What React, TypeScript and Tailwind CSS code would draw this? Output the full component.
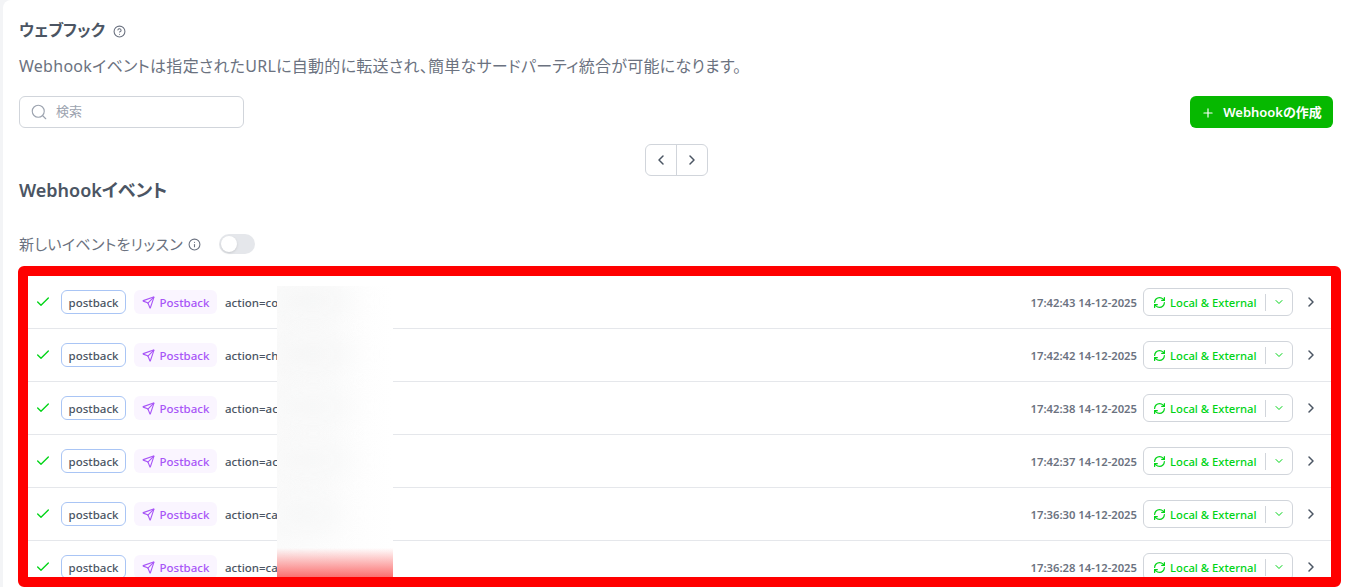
import React from "react";
import { ChevronDown, ChevronLeft, ChevronRight, Check, CircleHelp, Info, Plus, RefreshCw, Search, Send } from "lucide-react";

const rows = [
  { action: "action=co", time: "17:42:43 14-12-2025" },
  { action: "action=ch", time: "17:42:42 14-12-2025" },
  { action: "action=ac", time: "17:42:38 14-12-2025" },
  { action: "action=ac", time: "17:42:37 14-12-2025" },
  { action: "action=ca", time: "17:36:30 14-12-2025" },
  { action: "action=ca", time: "17:36:28 14-12-2025" },
];

function EventRow({ action, time }: { action: string; time: string }) {
  return (
    <div className="flex h-[53px] shrink-0 items-center border-b border-[#e5e7eb] pl-[7px] pr-3">
      <Check className="mr-[10px] shrink-0 text-[#00d416]" size={16} strokeWidth={2} />
      <span className="flex h-6 w-[65px] items-center justify-center rounded-md border border-[#a9c5f5] pt-px text-[11.5px] font-medium text-[#4b5563]">
        postback
      </span>
      <span className="ml-2 flex h-6 w-[83px] items-center justify-center gap-[5px] rounded-md bg-[#faf5ff] pt-px text-[11.5px] font-medium text-[#a855f7]">
        <Send size={13} />
        Postback
      </span>
      <span className="ml-2 pt-px text-[11.5px] font-medium text-[#4b5563]">{action}</span>
      <span className="ml-auto pt-[2px] text-[11.25px] font-semibold text-[#6b7280]">{time}</span>
      <div className="ml-[6px] flex h-7 w-[150px] items-center whitespace-nowrap rounded-md border border-[#d1d5db] pl-[9px] text-[11.25px] font-medium text-[#00d416]">
        <RefreshCw size={13} strokeWidth={2.25} />
        <span className="ml-[4px] pt-[2px]">Local &amp; External</span>
        <span className="ml-[9px] h-[17px] w-px bg-[#d1d5db]" />
        <ChevronDown className="ml-[7px]" size={12} />
      </div>
      <ChevronRight className="ml-[10px] text-[#4b5563]" size={16} strokeWidth={2.25} />
    </div>
  );
}

export default function App() {
  return (
    <div className="h-[587px] w-[1345px] overflow-hidden bg-[#f3f4f6] pl-[3px] font-['Noto_Sans','Noto_Sans_CJK_JP',sans-serif] [font-feature-settings:'palt']">
      <div className="relative h-full rounded-tl-lg bg-white pl-4 pr-3">
        <div className="flex h-[60px] items-end pb-[20px]">
          <h1 className="text-[16px] font-bold leading-5 text-[#4b5563]">ウェブフック</h1>
          <CircleHelp className="mb-[2px] ml-2 text-[#6b7280]" size={13} />
        </div>
        <p className="-mt-[6px] text-[16px] leading-6 tracking-[0.27px] text-[#6b7280]">
          Webhookイベントは指定されたURLに自動的に転送され、簡単なサードパーティ統合が可能になります。
        </p>
        <div className="mt-[18px] flex items-center justify-between">
          <div className="flex h-8 w-[225px] items-center rounded-md border border-[#d1d5db] pl-[10px] text-[13px] text-[#9ca3af]">
            <Search size={18} strokeWidth={1.5} />
            <span className="ml-2">検索</span>
          </div>
          <button className="flex h-8 w-[143px] items-center justify-center gap-2 rounded-md bg-[#06b800] pt-px text-[13px] font-semibold text-white">
            <Plus size={14} />
            Webhookの作成
          </button>
        </div>
        <div className="mt-4 flex justify-center">
          <div className="flex h-8 w-[63px] rounded-md border border-[#d1d5db] text-[#4b5563]">
            <span className="flex flex-1 items-center justify-center border-r border-[#d1d5db]">
              <ChevronLeft size={16} strokeWidth={2.25} />
            </span>
            <span className="flex flex-1 items-center justify-center">
              <ChevronRight size={16} strokeWidth={2.25} />
            </span>
          </div>
        </div>
        <h2 className="text-[18px] font-semibold leading-7 text-[#4b5563]">Webhookイベント</h2>
        <div className="mt-[30px] flex h-5 items-center text-[15px] tracking-[0.33px] text-[#6b7280]">
          新しいイベントをリッスン
          <Info className="ml-[5px] text-[#6b7280]" size={13} />
          <span className="ml-[18px] flex h-5 w-9 items-center rounded-full bg-[#e5e7eb] pl-[2px]">
            <span className="h-4 w-4 rounded-full bg-white shadow-sm" />
          </span>
        </div>
        <div className="relative -mr-2 ml-[-1px] mt-3 h-[321px] overflow-hidden rounded-md border-[10px] border-[#ff0000]">
          {rows.map((row) => (
            <EventRow key={row.time} action={row.action} time={row.time} />
          ))}
          <div className="absolute bottom-0 left-[249px] top-[10px] w-[116px] overflow-hidden bg-gradient-to-r from-[#fbfbfb] to-white">
            <div className="absolute left-[0px] top-[6px] h-[18px] w-[72px] rounded-full bg-[#f0f1f1] blur-lg" />
            <div className="absolute left-[0px] top-[59px] h-[18px] w-[72px] rounded-full bg-[#f0f1f1] blur-lg" />
            <div className="absolute left-[0px] top-[112px] h-[18px] w-[72px] rounded-full bg-[#f2f3f3] blur-lg" />
            <div className="absolute left-[0px] top-[165px] h-[18px] w-[72px] rounded-full bg-[#f2f3f3] blur-lg" />
            <div className="absolute left-[0px] top-[218px] h-[18px] w-[62px] rounded-full bg-[#f2f3f3] blur-lg" />
            <div className="absolute inset-x-0 bottom-0 h-[29px] bg-gradient-to-b from-transparent to-[#fb7070]" />
          </div>
        </div>
      </div>
    </div>
  );
}
